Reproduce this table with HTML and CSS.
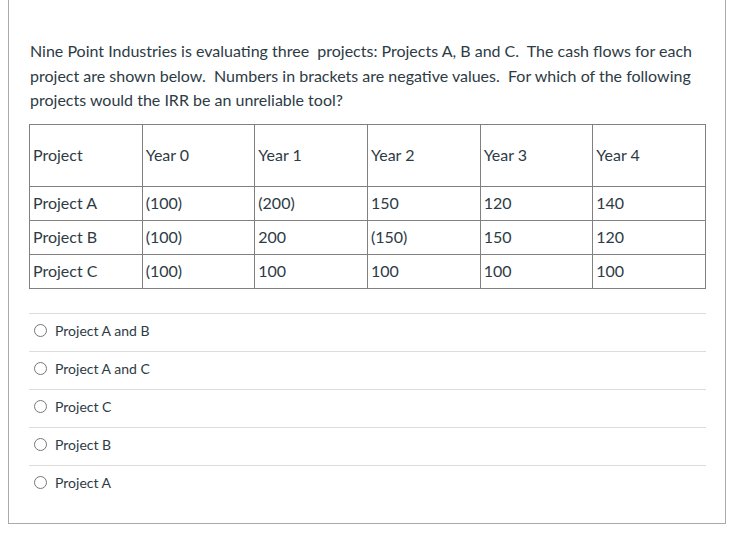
FILE: index.html
```html
<!DOCTYPE html>
<html>
<head>
<meta charset="utf-8">
<link rel="stylesheet" href="styles.css">
</head>
<body>
<div class="card">
  <div class="question">
    <p class="stem">Nine Point Industries is evaluating three&nbsp; projects: Projects A, B and C.&nbsp; The cash flows for each project are shown below.&nbsp; Numbers in brackets are negative values.&nbsp; For which of the following projects would the IRR be an unreliable tool?</p>
    <table class="flows">
      <tr class="head"><td>Project</td><td>Year 0</td><td>Year 1</td><td>Year 2</td><td>Year 3</td><td>Year 4</td></tr>
      <tr><td>Project A</td><td>(100)</td><td>(200)</td><td>150</td><td>120</td><td>140</td></tr>
      <tr><td>Project B</td><td>(100)</td><td>200</td><td>(150)</td><td>150</td><td>120</td></tr>
      <tr><td>Project C</td><td>(100)</td><td>100</td><td>100</td><td>100</td><td>100</td></tr>
    </table>
  </div>
  <div class="answers">
    <label class="answer"><span class="radio"></span><span>Project A and B</span></label>
    <label class="answer"><span class="radio"></span><span>Project A and C</span></label>
    <label class="answer"><span class="radio"></span><span>Project C</span></label>
    <label class="answer"><span class="radio"></span><span>Project B</span></label>
    <label class="answer"><span class="radio"></span><span>Project A</span></label>
  </div>
</div>
</body>
</html>
```

FILE: styles.css
```css
html, body {
  margin: 0;
  padding: 0;
  background: #fff;
}
body {
  font-family: Lato, "Open Sans", sans-serif;
  color: #2d3b45;
}
.card {
  margin-left: 8px;
  width: 716px;
  height: 523px;
  border: 1px solid #aaaaaa;
  border-top: none;
  box-sizing: content-box;
}
.question {
  padding: 39px 0 0 20px;
}
.stem {
  margin: 0 0 11px 1px;
  width: 672px;
  font-size: 16px;
  line-height: 24.5px;
}
.flows {
  border-collapse: collapse;
  width: 677px;
  table-layout: fixed;
  font-size: 16px;
}
.flows td {
  border: 1px solid #808080;
  padding: 0 3px 1px;
  height: 32px;
  vertical-align: middle;
}
.flows .head td {
  height: 60px;
}
.answers {
  margin: 24px 0 0 20px;
  width: 677px;
}
.answer {
  display: flex;
  align-items: center;
  gap: 8px;
  height: 33px;
  padding-bottom: 4px;
  border-top: 1px solid #dddddd;
  padding-left: 5px;
  font-size: 14px;
}
.radio {
  width: 11px;
  height: 11px;
  border: 1px solid #777;
  border-radius: 50%;
  box-sizing: content-box;
}
```
